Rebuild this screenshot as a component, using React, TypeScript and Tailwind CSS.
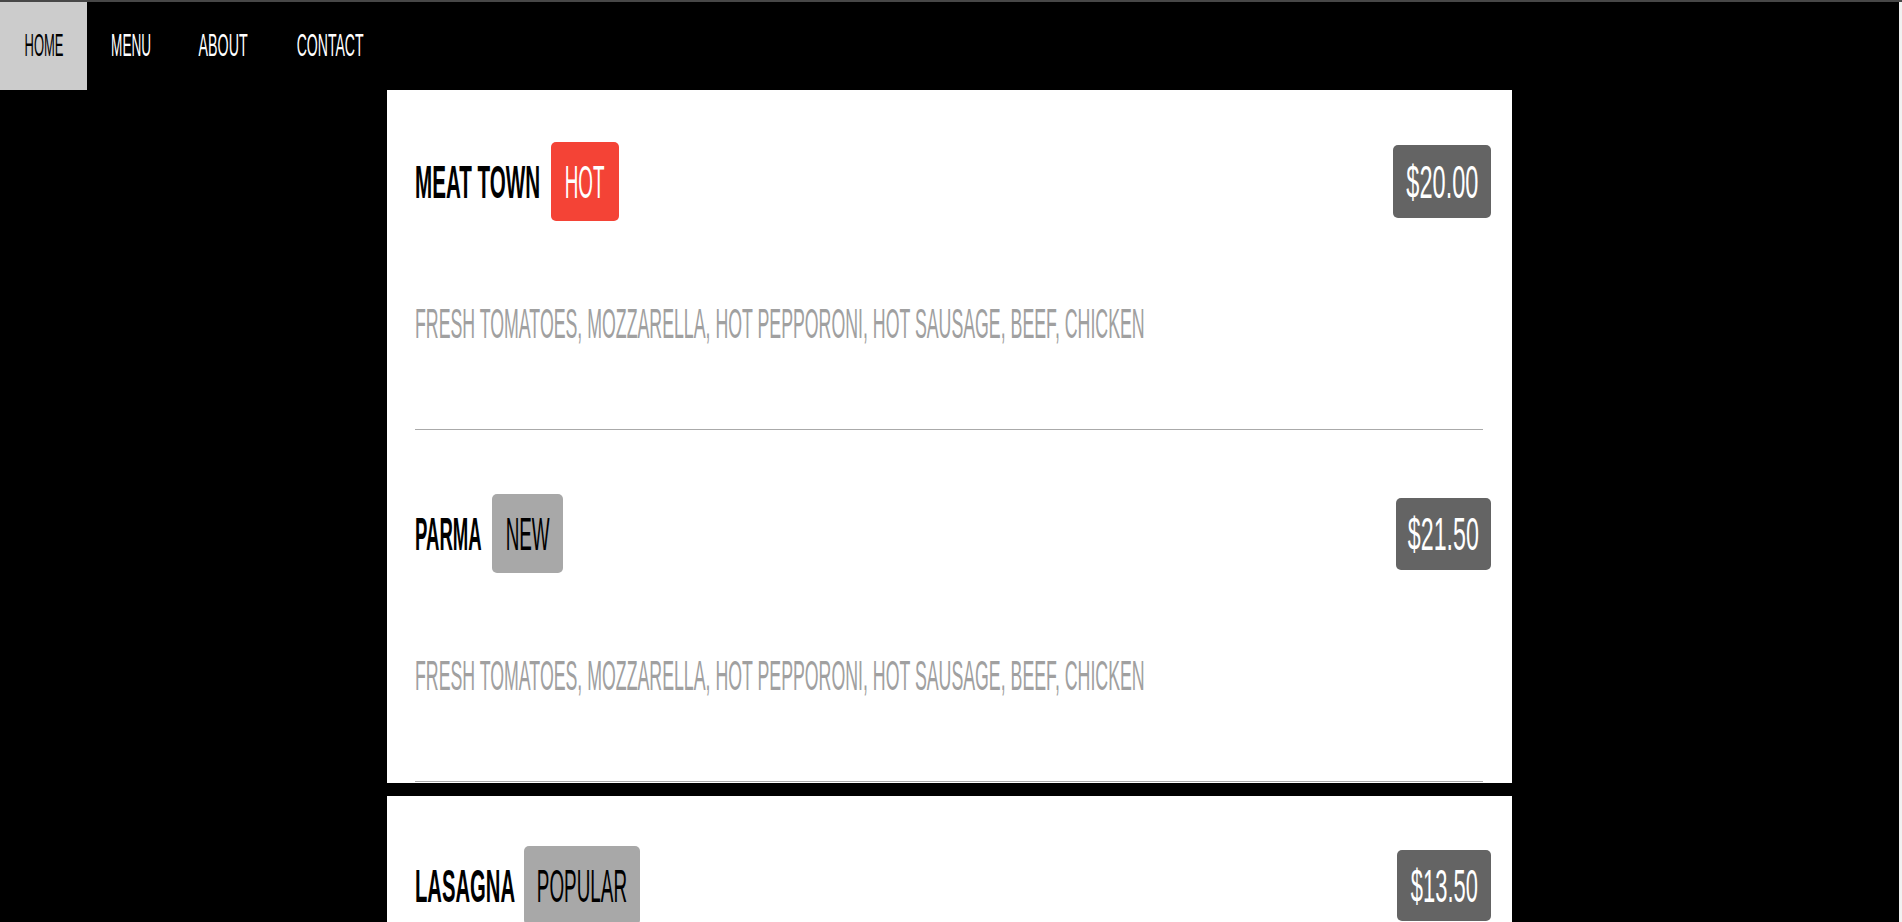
import React from "react";

type Item = {
  name: string;
  nameBox: string;
  nameScale: string;
  badge: string;
  badgeBox: string;
  price: string;
  priceBox: string;
  priceScale: string;
};

const nav = [
  { label: "HOME", box: "w-[87px] bg-[#cccccc] text-black", sx: "scale-x-[0.406]" },
  { label: "MENU", box: "w-[88px] text-white", sx: "scale-x-[0.425]" },
  { label: "ABOUT", box: "w-[97px] text-white", sx: "scale-x-[0.445]" },
  { label: "CONTACT", box: "w-[116px] text-white", sx: "scale-x-[0.44]" },
];

const card1: Item[] = [
  {
    name: "MEAT TOWN",
    nameBox: "w-[127px]",
    nameScale: "scale-x-[0.448]",
    badge: "HOT",
    badgeBox: "w-[68px] bg-[#f44336] text-white",
    price: "$20.00",
    priceBox: "w-[98px] h-[73px]",
    priceScale: "scale-x-[0.512]",
  },
  {
    name: "PARMA",
    nameBox: "w-[68px]",
    nameScale: "scale-x-[0.403]",
    badge: "NEW",
    badgeBox: "w-[71px] bg-[#a8a8a8] text-black",
    price: "$21.50",
    priceBox: "w-[95px] h-[72px]",
    priceScale: "scale-x-[0.505]",
  },
];

const card2: Item[] = [
  {
    name: "LASAGNA",
    nameBox: "w-[100px]",
    nameScale: "scale-x-[0.44]",
    badge: "POPULAR",
    badgeBox: "w-[116px] bg-[#a8a8a8] text-black",
    price: "$13.50",
    priceBox: "w-[94px] h-[71px]",
    priceScale: "scale-x-[0.476]",
  },
];

const DESC = "FRESH TOMATOES, MOZZARELLA, HOT PEPPORONI, HOT SAUSAGE, BEEF, CHICKEN";

function MenuItem({ item, first }: { item: Item; first: boolean }) {
  return (
    <div className={first ? "" : "mt-[64px]"}>
      <div className="flex h-[79px] items-center justify-between">
        <div className="flex h-[79px] items-center">
          <div className={`flex h-[79px] items-center ${item.nameBox}`}>
            <span
              className={`inline-block shrink-0 origin-left whitespace-nowrap text-[46px] font-bold leading-none text-black ${item.nameScale}`}
            >
              {item.name}
            </span>
          </div>
          <div
            className={`ml-[9px] flex h-[79px] items-center justify-center rounded-[5px] ${item.badgeBox}`}
          >
            <span className="inline-block shrink-0 origin-center scale-x-[0.41] whitespace-nowrap text-[46px] leading-none">
              {item.badge}
            </span>
          </div>
        </div>
        <div
          className={`-mr-[8px] flex items-center justify-center rounded-[5px] bg-[#646464] text-white ${item.priceBox}`}
        >
          <span
            className={`inline-block shrink-0 origin-center whitespace-nowrap text-[46px] leading-none ${item.priceScale}`}
          >
            {item.price}
          </span>
        </div>
      </div>
      <div className="mt-[82px] h-[42px]">
        <span className="inline-block origin-left scale-x-[0.4225] whitespace-nowrap text-[42px] leading-[42px] text-[#a0a0a0]">
          {DESC}
        </span>
      </div>
      <div className="mt-[84px] h-px bg-[#aaaaaa]" />
    </div>
  );
}

export default function App() {
  return (
    <div className="flex h-[922px] w-full flex-col overflow-hidden bg-black font-['Liberation_Sans',Arial,sans-serif]">
      <div className="h-[2px] w-full bg-[#474747]" />
      <div className="flex min-h-0 flex-1">
        <div className="min-w-0 flex-1 overflow-hidden">
          <nav className="flex h-[88px]">
            {nav.map((n) => (
              <div key={n.label} className={`flex h-[88px] items-center justify-center pb-[2px] ${n.box}`}>
                <span
                  className={`inline-block shrink-0 origin-center whitespace-nowrap text-[32px] leading-none ${n.sx}`}
                >
                  {n.label}
                </span>
              </div>
            ))}
          </nav>
          <div className="mx-auto w-[1125px] overflow-hidden bg-white pl-[28px] pr-[29px] pt-[52px]">
            {card1.map((it, i) => (
              <MenuItem key={it.name} item={it} first={i === 0} />
            ))}
            <div className="h-px" />
          </div>
          <div className="mx-auto mt-[13px] w-[1125px] overflow-hidden bg-white pl-[28px] pr-[29px] pt-[50px]">
            {card2.map((it, i) => (
              <MenuItem key={it.name} item={it} first={i === 0} />
            ))}
          </div>
        </div>
        <div className="w-[3px] bg-[#f1f1f1]" />
      </div>
    </div>
  );
}
